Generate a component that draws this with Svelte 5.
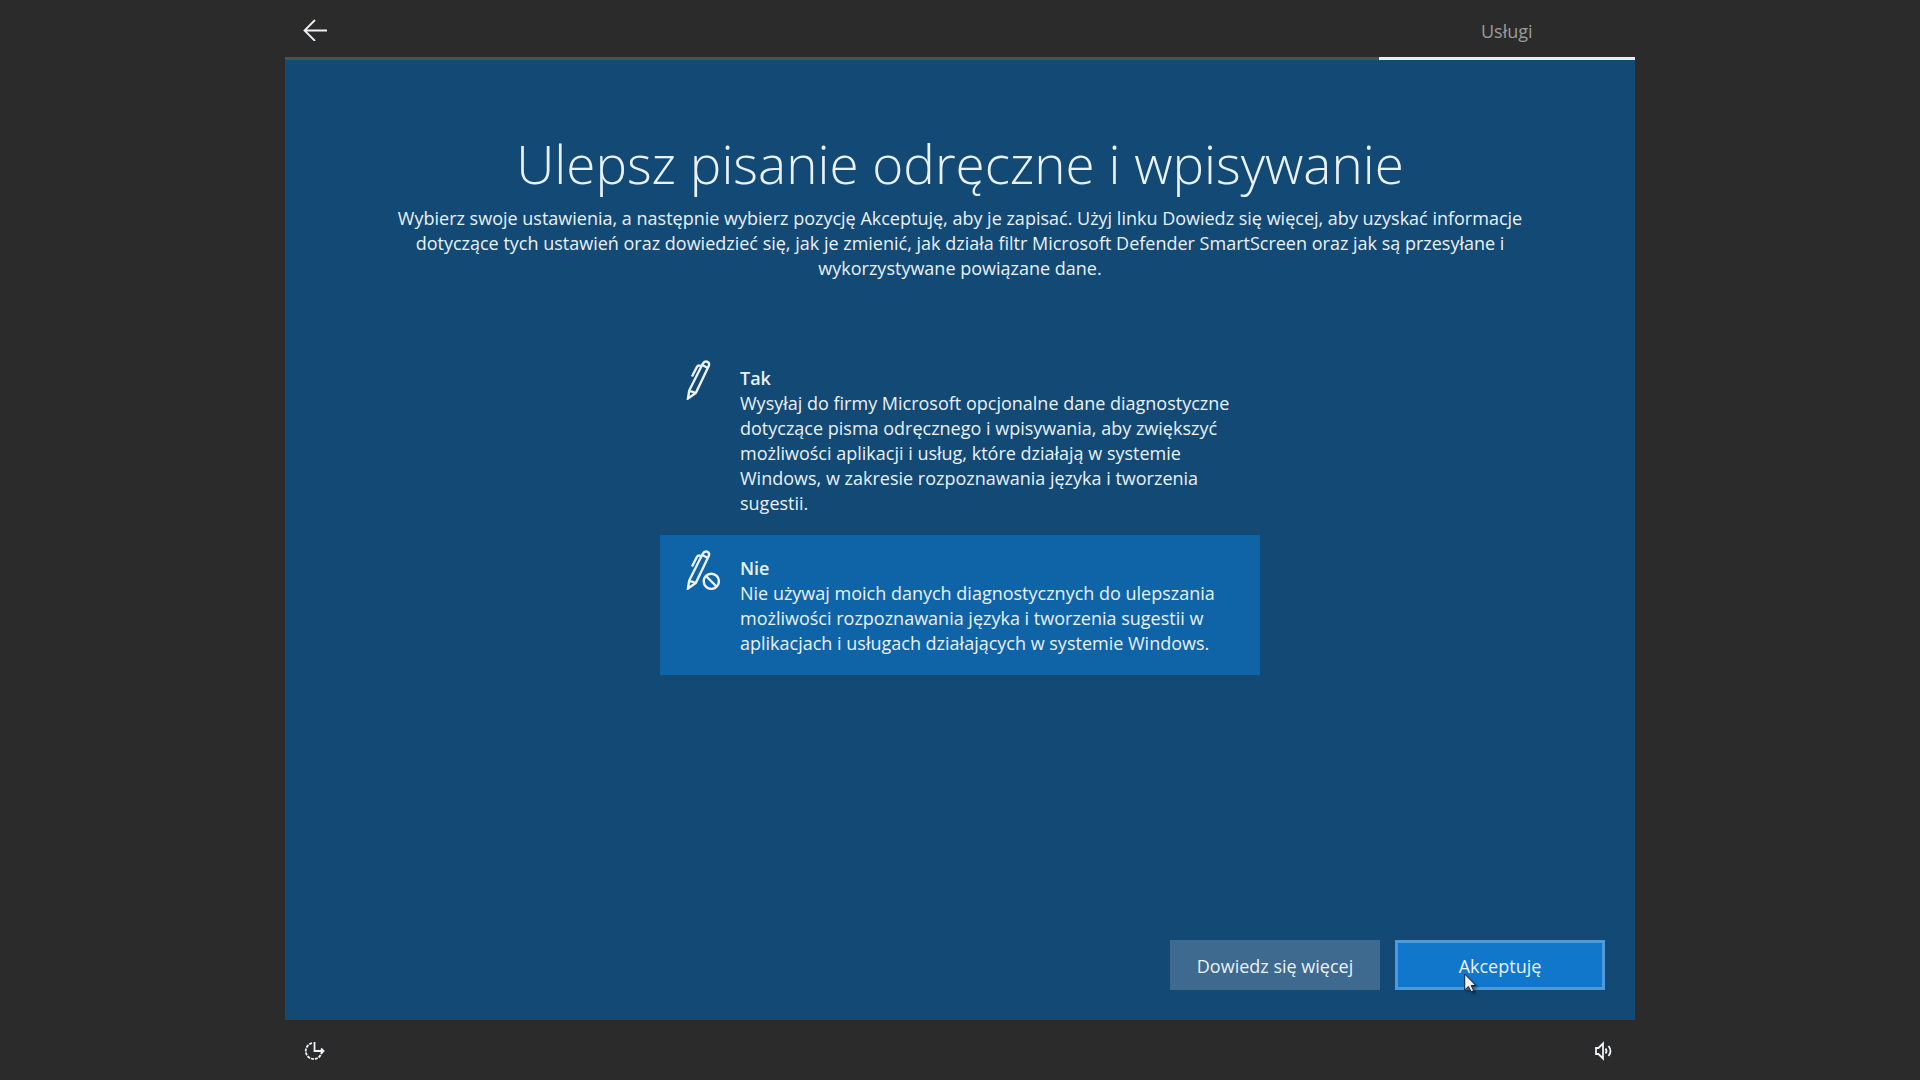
<script>
  let choice = $state("no");

  const options = [
    {
      id: "yes",
      label: "Tak",
      lines: [
        "Wysyłaj do firmy Microsoft opcjonalne dane diagnostyczne",
        "dotyczące pisma odręcznego i wpisywania, aby zwiększyć",
        "możliwości aplikacji i usług, które działają w systemie",
        "Windows, w zakresie rozpoznawania języka i tworzenia",
        "sugestii.",
      ],
    },
    {
      id: "no",
      label: "Nie",
      lines: [
        "Nie używaj moich danych diagnostycznych do ulepszania",
        "możliwości rozpoznawania języka i tworzenia sugestii w",
        "aplikacjach i usługach działających w systemie Windows.",
      ],
    },
  ];

  const intro = [
    "Wybierz swoje ustawienia, a następnie wybierz pozycję Akceptuję, aby je zapisać. Użyj linku Dowiedz się więcej, aby uzyskać informacje",
    "dotyczące tych ustawień oraz dowiedzieć się, jak je zmienić, jak działa filtr Microsoft Defender SmartScreen oraz jak są przesyłane i",
    "wykorzystywane powiązane dane.",
  ];
</script>

<div class="oobe">
  <header class="top">
    <button class="icon-btn" aria-label="Wstecz">
      <svg width="24" height="24" viewBox="0 0 24 24">
        <path class="thin" d="M12 3 1.500 13.500 12 24M1.500 13.500H24" />
      </svg>
    </button>
    <div class="step">Usługi</div>
  </header>

  <main class="panel">
    <h1>Ulepsz pisanie odręczne i wpisywanie</h1>
    <p class="intro">{intro.join("\n")}</p>

    <div class="options" role="radiogroup" aria-label="Pisanie odręczne i wpisywanie">
      {#each options as opt}
        <label class="option" class:selected={choice === opt.id}>
          <input type="radio" name="inking" value={opt.id} bind:group={choice} />
          <svg class="pen" width="40" height="40" viewBox="0 0 40 40">
            <path d="M8 38.5 9.2 30.5 22.6 4Q24.4 .8 27 1.600 30 2.800 28.700 6L15.800 33Z" />
            <path d="M22.200 5 28 8M9.200 31.500Q13.500 31 15 33.500" />
            <path d="M20.600 5.800Q18 4.800 17 6.800L12 16.500" />
            {#if opt.id === "no"}
              <circle cx="31.300" cy="31.300" r="7.600" />
              <path d="m26 26 10.600 10.600" />
            {/if}
          </svg>
          <span class="text">
            <strong>{opt.label}</strong>
            <span class="desc">{opt.lines.join("\n")}</span>
          </span>
        </label>
      {/each}
    </div>

    <div class="actions">
      <button class="btn">Dowiedz się więcej</button>
      <button class="btn primary">
        Akceptuję
        <svg class="pointer" width="16" height="22" viewBox="0 0 16 22">
          <path d="M.7 1v16l3.700-3.500 2.800 5.300 2.500-1.200-2.500-5.100h4.600Z" />
        </svg>
      </button>
    </div>
  </main>

  <footer class="bottom">
    <button class="icon-btn" aria-label="Ułatwienia dostępu">
      <svg width="24" height="24" viewBox="0 0 24 24">
        <path class="dashes" d="M9 5.200A8 8 0 1 0 18.500 15" />
        <path class="thin" d="M11.500 4v9H21M18 10.500l2.500 2.500-2.500 2.500" />
      </svg>
    </button>
    <button class="icon-btn" aria-label="Głośność">
      <svg width="24" height="24" viewBox="0 0 24 24">
        <path class="thin" d="M3 10h2.500l4.500-4.500v15L5.500 16H3ZM12.500 10.500q2 2.500 0 5M15.500 8q4 5 0 10" />
      </svg>
    </button>
  </footer>
</div>

<style>
  :global(body) {
    margin: 0;
    background: #2b2b2b;
  }

  .oobe {
    display: flex;
    flex-direction: column;
    width: 70.3125%;
    min-height: 100vh;
    margin: 0 auto;
    color: #e9f1f9;
    font-family: "Open Sans", "Noto Sans", sans-serif;
    font-size: 18px;
    line-height: 25px;
  }

  button {
    font: inherit;
    color: inherit;
    border: none;
    cursor: pointer;
  }

  svg {
    fill: none;
    stroke: #eef2f6;
    stroke-width: 2.4;
  }

  .thin {
    stroke-width: 1.8;
  }

  .top {
    display: flex;
    justify-content: space-between;
    box-sizing: border-box;
    height: 60px;
    border-bottom: 3px solid #4c5058;
  }

  .icon-btn {
    display: flex;
    align-items: center;
    padding: 0 18px;
    background: none;
  }

  .step {
    width: 19%;
    margin-bottom: -3px;
    border-bottom: 3px solid #e9ecf6;
    color: #9b9b9b;
    line-height: 63px;
    height: 57px;
    text-align: center;
  }

  .panel {
    display: flex;
    flex: 1;
    flex-direction: column;
    align-items: center;
    padding: 64px 30px 30px;
    background: #124975;
  }

  h1 {
    margin: 0 0 2px;
    font-size: 53px;
    font-weight: 300;
    line-height: 80px;
  }

  .intro {
    margin: 0;
    text-align: center;
    white-space: pre-line;
  }

  .options {
    width: 600px;
    max-width: 100%;
    margin: 64px 0 40px;
  }

  .option {
    display: flex;
    gap: 20px;
    padding: 15px 20px;
    cursor: pointer;
  }

  .option.selected {
    background: #0f64a7;
  }

  .option input {
    position: absolute;
    opacity: 0;
    pointer-events: none;
  }

  .pen {
    flex: none;
  }

  .text {
    padding: 6px 0 4px;
  }

  strong {
    display: block;
    font-weight: 600;
  }

  .desc {
    white-space: pre-line;
  }

  .actions {
    display: flex;
    gap: 15px;
    margin-top: auto;
    margin-left: auto;
  }

  .btn {
    width: 210px;
    height: 50px;
    padding: 2px 0 0;
    background: #3d6a8e;
  }

  .btn.primary {
    position: relative;
    border: 3px solid #4f9ad8;
    background: #1177cb;
  }

  .pointer {
    position: absolute;
    top: 30px;
    left: 66px;
    fill: #eef0f4;
    stroke: #16202c;
    stroke-width: 1;
    filter: drop-shadow(2px 2px 1px rgba(0, 0, 0, 0.4));
  }

  .bottom {
    display: flex;
    justify-content: space-between;
    height: 60px;
  }

  .dashes {
    stroke-width: 1.8;
    stroke-dasharray: 3 1;
  }
</style>
